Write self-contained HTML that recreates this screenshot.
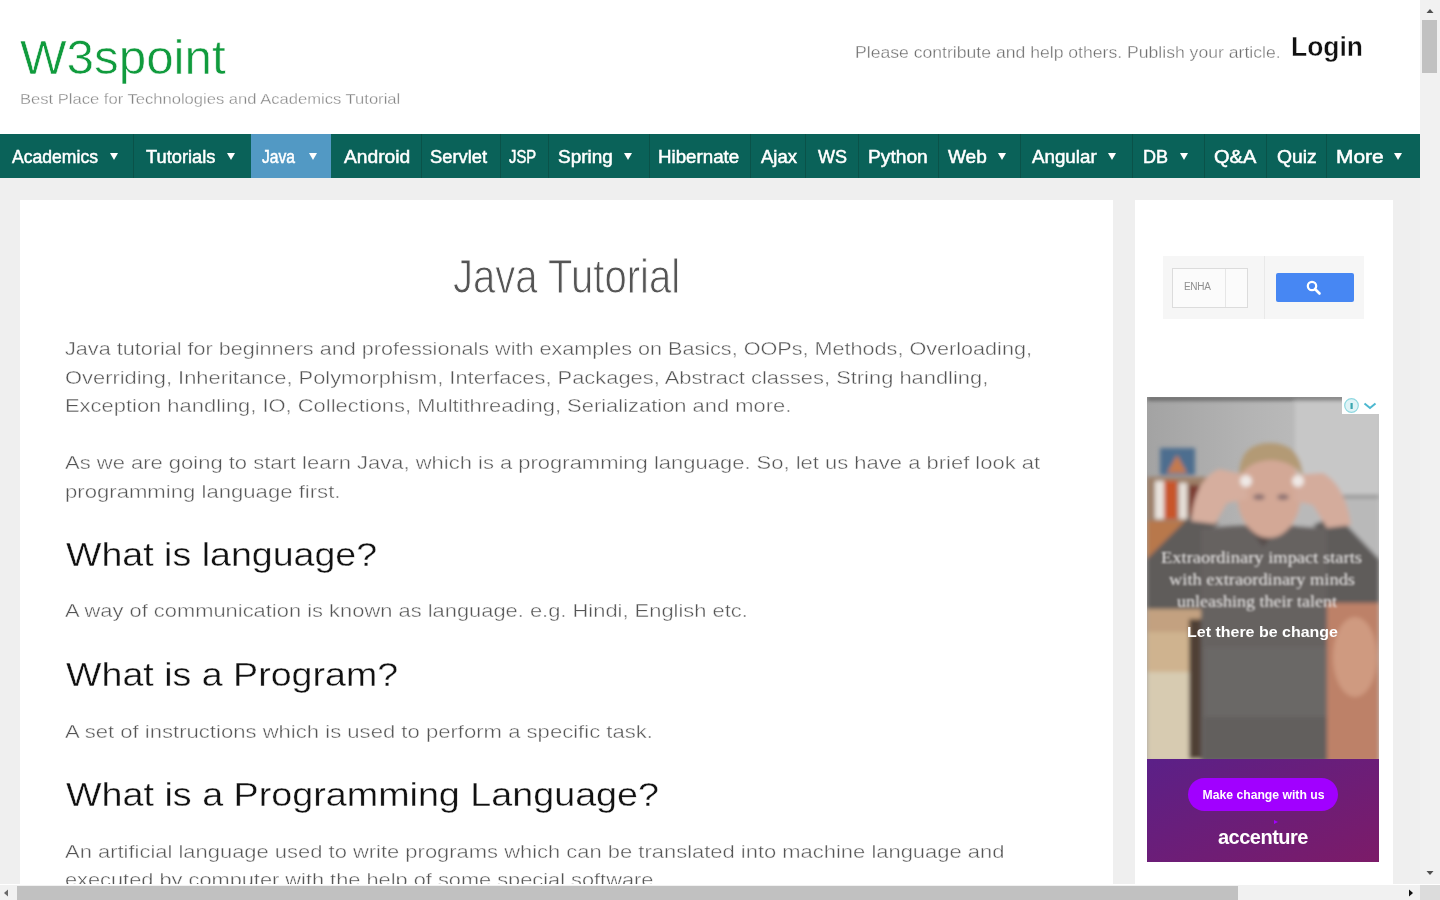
<!DOCTYPE html>
<html><head><meta charset="utf-8">
<style>
*{margin:0;padding:0;box-sizing:border-box}
html,body{width:1440px;height:900px;overflow:hidden;background:#fff;font-family:"Liberation Sans",sans-serif}
#wrap{position:absolute;left:0;top:0;width:1440px;height:900px;filter:blur(0.55px)}
.a{position:absolute;white-space:nowrap;line-height:1;transform-origin:0 0}
#page{position:absolute;left:0;top:0;width:1420px;height:884px;background:#efefef;overflow:hidden}
#header{position:absolute;left:0;top:0;width:1420px;height:134px;background:#fff}
#logo{left:20px;top:33.8px;font-size:48px;color:#109b3d;transform:scaleX(1.028);-webkit-text-stroke:0.6px #fff}
#tag{left:20px;top:91px;font-size:15px;color:#858585;transform:scaleX(1.105);-webkit-text-stroke:0.3px #fff}
#contrib{left:855px;top:45px;font-size:16px;color:#707070;transform:scaleX(1.1);-webkit-text-stroke:0.3px #fff}
#login{left:1291px;top:34px;font-size:27px;font-weight:bold;color:#111;transform:scaleX(0.98);-webkit-text-stroke:0.4px #fff}
#nav{position:absolute;left:0;top:134px;width:1420px;height:44px;background:#0a6259}
#navitems .t{position:absolute;top:148px;font-size:18px;line-height:1;color:#fff;white-space:nowrap;-webkit-text-stroke:0.5px #fff;transform-origin:0 0}
#navitems .s{position:absolute;top:134px;width:1px;height:44px;background:#0a5249}
#navitems .ar{position:absolute;top:153px;width:0;height:0;border-left:4px solid transparent;border-right:4px solid transparent;border-top:7px solid #fff}
#act{position:absolute;left:251px;top:134px;width:80px;height:44px;background:#5299c4}
#main{position:absolute;left:20px;top:200px;width:1093px;height:700px;background:#fff}
#side{position:absolute;left:1135px;top:200px;width:258px;height:700px;background:#fff}
.p{font-size:19px;color:#555;-webkit-text-stroke:0.4px #fff}
.h{font-size:33px;color:#111;-webkit-text-stroke:0.35px #fff}
#title{left:453px;top:252px;font-size:48.5px;color:#555;transform:scaleX(0.826);-webkit-text-stroke:1px #fff}
#vs{position:absolute;left:1420px;top:0;width:20px;height:884px;background:#f1f1f1}
#vthumb{position:absolute;left:1422px;top:20px;width:15px;height:53px;background:#c1c1c1}
#hs{position:absolute;left:0;top:885px;width:1420px;height:15px;background:#f1f1f1}
#hthumb{position:absolute;left:17px;top:886px;width:1221px;height:14px;background:#c1c1c1}
#corner{position:absolute;left:1420px;top:885px;width:20px;height:15px;background:#dcdcdc}
</style></head><body><div id="wrap">
<div id="page">
 <div id="header">
  <div id="logo" class="a">W3spoint</div>
  <div id="tag" class="a">Best Place for Technologies and Academics Tutorial</div>
  <div id="contrib" class="a">Please contribute and help others. Publish your article.</div>
  <div id="login" class="a">Login</div>
 </div>
 <div id="nav"></div>
 
 <div id="act"></div>
 <div id="navitems">
<div class="t" style="left:12.0px;transform:scaleX(0.977)">Academics</div>
<div class="ar" style="left:110px"></div>
<div class="t" style="left:146.0px;transform:scaleX(1.015)">Tutorials</div>
<div class="ar" style="left:226.5px"></div>
<div class="t" style="left:262.0px;transform:scaleX(0.868)">Java</div>
<div class="ar" style="left:308.5px"></div>
<div class="t" style="left:344.0px;transform:scaleX(1.067)">Android</div>
<div class="t" style="left:430.0px;transform:scaleX(1.019)">Servlet</div>
<div class="t" style="left:509.0px;transform:scaleX(0.823)">JSP</div>
<div class="t" style="left:558.0px;transform:scaleX(1.052)">Spring</div>
<div class="ar" style="left:624px"></div>
<div class="t" style="left:658.0px;transform:scaleX(1.040)">Hibernate</div>
<div class="t" style="left:761.0px;transform:scaleX(1.029)">Ajax</div>
<div class="t" style="left:818.0px;transform:scaleX(1.000)">WS</div>
<div class="t" style="left:868.0px;transform:scaleX(1.067)">Python</div>
<div class="t" style="left:948.0px;transform:scaleX(1.057)">Web</div>
<div class="ar" style="left:998px"></div>
<div class="t" style="left:1032.0px;transform:scaleX(1.042)">Angular</div>
<div class="ar" style="left:1108px"></div>
<div class="t" style="left:1143.0px;transform:scaleX(1.000)">DB</div>
<div class="ar" style="left:1180px"></div>
<div class="t" style="left:1214.0px;transform:scaleX(1.111)">Q&amp;A</div>
<div class="t" style="left:1277.0px;transform:scaleX(1.071)">Quiz</div>
<div class="t" style="left:1336.0px;transform:scaleX(1.162)">More</div>
<div class="ar" style="left:1393.5px"></div>
<div class="s" style="left:133px"></div>
<div class="s" style="left:421px"></div>
<div class="s" style="left:500px"></div>
<div class="s" style="left:548px"></div>
<div class="s" style="left:649px"></div>
<div class="s" style="left:750px"></div>
<div class="s" style="left:805px"></div>
<div class="s" style="left:858px"></div>
<div class="s" style="left:938px"></div>
<div class="s" style="left:1020px"></div>
<div class="s" style="left:1132px"></div>
<div class="s" style="left:1204px"></div>
<div class="s" style="left:1266px"></div>
<div class="s" style="left:1326px"></div>
 </div>
 <div id="main"></div>
 <div id="side"></div>
 <div id="gs" style="position:absolute;left:1163px;top:256px;width:201px;height:63px;background:#f6f6f6"></div>
 <div style="position:absolute;left:1264px;top:256px;width:1px;height:63px;background:#e9e9e9"></div>
 <div style="position:absolute;left:1172px;top:268px;width:76px;height:40px;background:#fbfbfb;border:1px solid #dcdcdc"></div>
 <div style="position:absolute;left:1225px;top:269px;width:1px;height:38px;background:#e6e6e6"></div>
 <div class="a" style="left:1184px;top:282px;font-size:10px;color:#8f8f8f;letter-spacing:-0.3px">ENHA</div>
 <div style="position:absolute;left:1276px;top:273px;width:78px;height:29px;background:#4787f3;border-radius:2px"></div>
 <svg style="position:absolute;left:1305px;top:279px" width="18" height="18" viewBox="0 0 18 18"><circle cx="7" cy="7" r="4.2" fill="none" stroke="#fff" stroke-width="2.2"/><line x1="10" y1="10" x2="14.5" y2="14.5" stroke="#fff" stroke-width="2.6" stroke-linecap="round"/></svg>
 <svg id="ad" style="position:absolute;left:1147px;top:397px" width="232" height="465" viewBox="0 0 232 465">
<defs>
 <linearGradient id="wall" x1="0" y1="0" x2="1" y2="0"><stop offset="0" stop-color="#a3a3a3"/><stop offset="0.45" stop-color="#b4b4b4"/><stop offset="1" stop-color="#c4c4c4"/></linearGradient>
 <linearGradient id="purp" x1="0" y1="0" x2="1" y2="1"><stop offset="0" stop-color="#5b2088"/><stop offset="1" stop-color="#7c1b68"/></linearGradient>
 <filter id="bl" x="-20%" y="-20%" width="140%" height="140%"><feGaussianBlur stdDeviation="2.2"/></filter>
 <filter id="bl2"><feGaussianBlur stdDeviation="1"/></filter>
 <clipPath id="cp"><rect x="0" y="0" width="232" height="362"/></clipPath>
</defs>
<g clip-path="url(#cp)">
<rect x="0" y="0" width="232" height="362" fill="url(#wall)"/>
<g filter="url(#bl)">
 <rect x="148" y="4" width="84" height="96" fill="#c7c7c7"/>
 <rect x="150" y="98" width="82" height="3" fill="#8c8c8c"/>
 <rect x="150" y="101" width="82" height="60" fill="#b9b9b9"/>
 <rect x="0" y="0" width="232" height="3" fill="#4a4a4a"/>
 <rect x="13" y="51" width="35" height="27" fill="#4d6e8f"/>
 <path d="M20 76 L30 58 L40 76 Z" fill="#c47a4e"/>
 <rect x="0" y="80" width="62" height="85" fill="#9d7f68"/>
 <rect x="8" y="84" width="9" height="38" fill="#e9e3dd"/>
 <rect x="17" y="84" width="13" height="38" fill="#c9542a"/>
 <rect x="32" y="86" width="8" height="36" fill="#e6dfd8"/>
 <rect x="42" y="88" width="10" height="34" fill="#7a3a30"/>
 <rect x="0" y="124" width="40" height="40" fill="#b8784c"/>
 <rect x="0" y="205" width="56" height="30" fill="#c3a180"/>
 <rect x="0" y="235" width="56" height="40" fill="#cfb38f"/>
 <rect x="0" y="275" width="56" height="90" fill="#d7cbb1"/>
 <rect x="42" y="222" width="15" height="140" fill="#4f4036"/>
 <rect x="178" y="200" width="54" height="165" fill="#bd8167"/>
 <ellipse cx="208" cy="260" rx="22" ry="40" fill="#cf9a80"/>
 <path d="M0 162 L46 116 L72 126 L58 138 L58 212 L0 212 Z" fill="#5f5b5a"/>
 <path d="M232 162 L190 118 L166 128 L178 138 L178 206 L232 206 Z" fill="#5f5b5a"/>
 <path d="M54 132 Q116 124 180 132 L180 365 L54 365 Z" fill="#666261"/>
 <rect x="58" y="250" width="122" height="70" fill="#6b6766"/><rect x="58" y="320" width="122" height="45" fill="#625e5d"/>
 <path d="M100 128 L116 150 L134 128 Z" fill="#574d4b"/>
 <ellipse cx="122" cy="97" rx="32" ry="44" fill="#d3a896"/>
 <path d="M92 80 Q92 46 123 46 Q154 46 156 80 Q146 64 124 63 Q102 64 92 80 Z" fill="#b39a74"/>
 <path d="M44 124 Q48 82 72 72 L100 78 L100 102 L80 106 L68 127 Z" fill="#d6ae9e"/>
 <path d="M204 128 Q198 88 176 76 L148 78 L148 104 L166 108 L180 131 Z" fill="#d4ac9c"/>
 <circle cx="99" cy="84" r="6" fill="#efe9e6"/>
 <circle cx="151" cy="84" r="6" fill="#efe9e6"/>
 <ellipse cx="112" cy="100" rx="6" ry="3" fill="#8a7070"/>
 <ellipse cx="136" cy="100" rx="6" ry="3" fill="#8a7070"/>
</g>
<g fill="#f0eeee" font-family="Liberation Serif" font-size="17" filter="url(#bl2)" lengthAdjust="spacingAndGlyphs">
 <text x="14" y="166" textLength="201" lengthAdjust="spacingAndGlyphs">Extraordinary impact starts</text>
 <text x="22" y="188" textLength="186" lengthAdjust="spacingAndGlyphs">with extraordinary minds</text>
 <text x="30" y="210" textLength="160" lengthAdjust="spacingAndGlyphs">unleashing their talent</text>
</g>
<text x="40" y="240" fill="#fff" font-family="Liberation Sans" font-weight="bold" font-size="15" textLength="151" lengthAdjust="spacingAndGlyphs">Let there be change</text>
</g>
<rect x="0" y="362" width="232" height="103" fill="url(#purp)"/>
<rect x="41" y="381" width="150" height="33" rx="16.5" fill="#a100ff"/>
<text x="55.5" y="402" fill="#fff" font-family="Liberation Sans" font-weight="bold" font-size="12.5" textLength="122" lengthAdjust="spacingAndGlyphs">Make change with us</text>
<text x="116" y="447" fill="#fff" font-family="Liberation Sans" font-weight="bold" font-size="20" text-anchor="middle" letter-spacing="-0.5">accenture</text>
<path d="M127 423 l4 2 l-4 2 z" fill="#a100ff"/>
<rect x="195" y="0" width="37" height="17" fill="#fff"/>
<circle cx="204.5" cy="8.5" r="6.8" fill="#dff3f6" stroke="#8fd8e0" stroke-width="1.2"/>
<rect x="203.5" y="6" width="2.2" height="6" fill="#3aa6b0"/>
<path d="M217.5 6.5 l5.5 4.5 l5.5 -4.5" fill="none" stroke="#4cb8d0" stroke-width="2"/>
</svg>
 <div id="content">
  <div id="title" class="a">Java Tutorial</div>
  <div class="a p" style="left:65px;top:339.4px;transform:scaleX(1.1374)">Java tutorial for beginners and professionals with examples on Basics, OOPs, Methods, Overloading,</div>
  <div class="a p" style="left:65px;top:367.7px;transform:scaleX(1.1518)">Overriding, Inheritance, Polymorphism, Interfaces, Packages, Abstract classes, String handling,</div>
  <div class="a p" style="left:65px;top:396.2px;transform:scaleX(1.1539)">Exception handling, IO, Collections, Multithreading, Serialization and more.</div>
  <div class="a p" style="left:65px;top:453.4px;transform:scaleX(1.1570)">As we are going to start learn Java, which is a programming language. So, let us have a brief look at</div>
  <div class="a p" style="left:65px;top:481.8px;transform:scaleX(1.1643)">programming language first.</div>
  <div class="a h" style="left:66px;top:537.9px;transform:scaleX(1.1382)">What is language?</div>
  <div class="a p" style="left:65px;top:600.9px;transform:scaleX(1.1524)">A way of communication is known as language. e.g. Hindi, English etc.</div>
  <div class="a h" style="left:66px;top:658.4px;transform:scaleX(1.1390)">What is a Program?</div>
  <div class="a p" style="left:65px;top:721.5px;transform:scaleX(1.1624)">A set of instructions which is used to perform a specific task.</div>
  <div class="a h" style="left:66px;top:778px;transform:scaleX(1.1423)">What is a Programming Language?</div>
  <div class="a p" style="left:65px;top:841.7px;transform:scaleX(1.1551)">An artificial language used to write programs which can be translated into machine language and</div>
  <div class="a p" style="left:65px;top:870.1px;transform:scaleX(1.1463)">executed by computer with the help of some special software.</div>
 </div>
</div>
<div id="vs"></div>
<div id="vthumb"></div>
<div id="hs"></div>
<div id="hthumb"></div>
<div id="corner"></div>
<svg style="position:absolute;left:1420px;top:0" width="20" height="884"><path d="M6.5 13 L10 9 L13.5 13 Z" fill="#505050"/><path d="M6.5 871 L10 875 L13.5 871 Z" fill="#505050"/></svg>
<svg style="position:absolute;left:0;top:885px" width="1420" height="15"><path d="M8 4.5 L4 8 L8 11.5 Z" fill="#6a6a6a"/><path d="M1409 4.5 L1413 8 L1409 11.5 Z" fill="#111"/></svg>
</div></body></html>
